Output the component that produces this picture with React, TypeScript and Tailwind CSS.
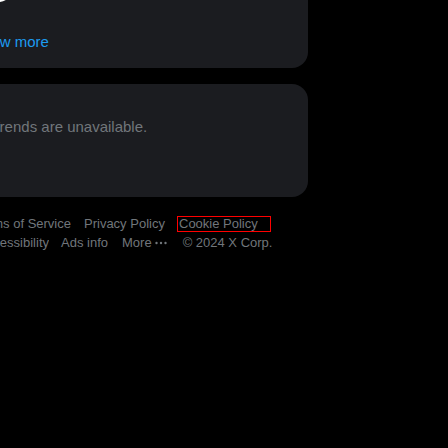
import React from 'react';

const gray = 'text-[#71767b]';

const Dots: React.FC = () => (
  <svg width="12" height="4" viewBox="0 0 12 4" className="ml-[3px] fill-current">
    <circle cx="1.5" cy="2" r="1.2" />
    <circle cx="6" cy="2" r="1.2" />
    <circle cx="10.5" cy="2" r="1.2" />
  </svg>
);

const App: React.FC = () => {
  return (
    <div className="min-h-screen bg-black overflow-hidden font-['Liberation_Sans',Arial,sans-serif]">
      {/* sidebar cards, left side runs off the page */}
      <div className="ml-[-43px] w-[351px] flex flex-col">
        <div className="-mt-[30px] rounded-2xl bg-[#1b1c20] pt-0">
          <div className="ml-4 w-[41px] h-8 rounded-full bg-white"></div>
          <div className="mt-[14px] h-[52px] px-4 flex items-center text-[15px] text-[#1d9bf0]">
            Show more
          </div>
        </div>
        <div className="mt-4 h-[113px] rounded-2xl bg-[#1b1c20]">
          <div className={`pt-[33px] pl-[34px] text-[15px] leading-5 ${gray}`}>
            Trends are unavailable.
          </div>
        </div>
      </div>

      {/* footer links */}
      <nav className={`mt-[19px] flex flex-col gap-[3px] text-[13px] leading-4 ${gray}`}>
        <div className="flex items-center h-4">
          <div className="w-[71px] flex justify-end overflow-hidden whitespace-nowrap">
            <span>Terms of Service</span>
          </div>
          <span className="ml-[13px] w-[82px] whitespace-nowrap">Privacy Policy</span>
          <span className="ml-[11px] w-[94px] h-4 border border-[#ff0000] pl-[1px] leading-[14px] whitespace-nowrap">
            Cookie Policy
          </span>
        </div>
        <div className="flex items-center h-4">
          <div className="w-[49px] flex justify-end overflow-hidden whitespace-nowrap">
            <span>Accessibility</span>
          </div>
          <span className="ml-3 w-[49px] whitespace-nowrap">Ads info</span>
          <span className="ml-3 flex items-center whitespace-nowrap">
            More
            <Dots />
          </span>
          <span className="ml-[16px] whitespace-nowrap">© 2024 X Corp.</span>
        </div>
      </nav>
    </div>
  );
};

export default App;
